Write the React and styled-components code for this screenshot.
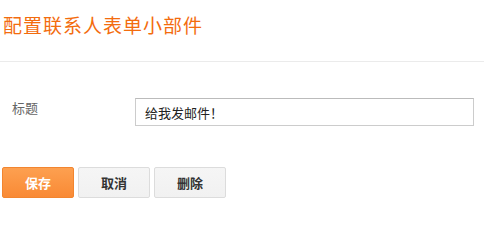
import React from 'react';
import styled, { createGlobalStyle } from 'styled-components';

const GlobalStyle = createGlobalStyle`
  body {
    margin: 0;
    background: #fff;
    font-family: "Liberation Sans", Arial, "Noto Sans CJK SC", sans-serif;
  }
`;

const Wrapper = styled.div`
  width: 484px;
  height: 203px;
  overflow: hidden;
`;

const Header = styled.div`
  height: 62px;
  padding-left: 3px;
  border-bottom: 1px solid #ebebeb;
  box-sizing: border-box;
  padding-top: 15px;
`;

const Title = styled.h3`
  margin: 0;
  font-size: 19px;
  line-height: 24px;
  font-weight: normal;
  color: #f36c0e;
  letter-spacing: 1px;
`;

const FormRow = styled.div`
  display: flex;
  align-items: flex-start;
  padding: 36px 0 0 12px;
`;

const Label = styled.label`
  width: 123px;
  font-size: 13px;
  line-height: 18px;
  color: #666;
  padding-top: 2px;
`;

const TextInput = styled.input`
  width: 339px;
  height: 28px;
  box-sizing: border-box;
  border: 1px solid #cccccc;
  border-top-color: #bbbbbb;
  padding: 0 9px;
  font-size: 13px;
  color: #222;
  font-family: inherit;
  outline: none;
`;

const Actions = styled.div`
  display: flex;
  gap: 4px;
  padding: 41px 0 0 2px;
`;

const Button = styled.button`
  width: 72px;
  height: 31px;
  box-sizing: border-box;
  border-radius: 2px;
  font-family: inherit;
  font-size: 13px;
  font-weight: bold;
  cursor: pointer;
  border: 1px solid ${p => (p.$primary ? '#f2852f' : '#dcdcdc')};
  color: ${p => (p.$primary ? '#fff' : '#333')};
  background: ${p =>
    p.$primary
      ? 'linear-gradient(#fda050, #f98a35)'
      : 'linear-gradient(#f5f5f5, #f1f1f1)'};
`;

export default function App() {
  return (
    <Wrapper>
      <GlobalStyle />
      <Header>
        <Title>配置联系人表单小部件</Title>
      </Header>
      <FormRow>
        <Label>标题</Label>
        <TextInput defaultValue="给我发邮件！" />
      </FormRow>
      <Actions>
        <Button $primary>保存</Button>
        <Button>取消</Button>
        <Button>删除</Button>
      </Actions>
    </Wrapper>
  );
}
